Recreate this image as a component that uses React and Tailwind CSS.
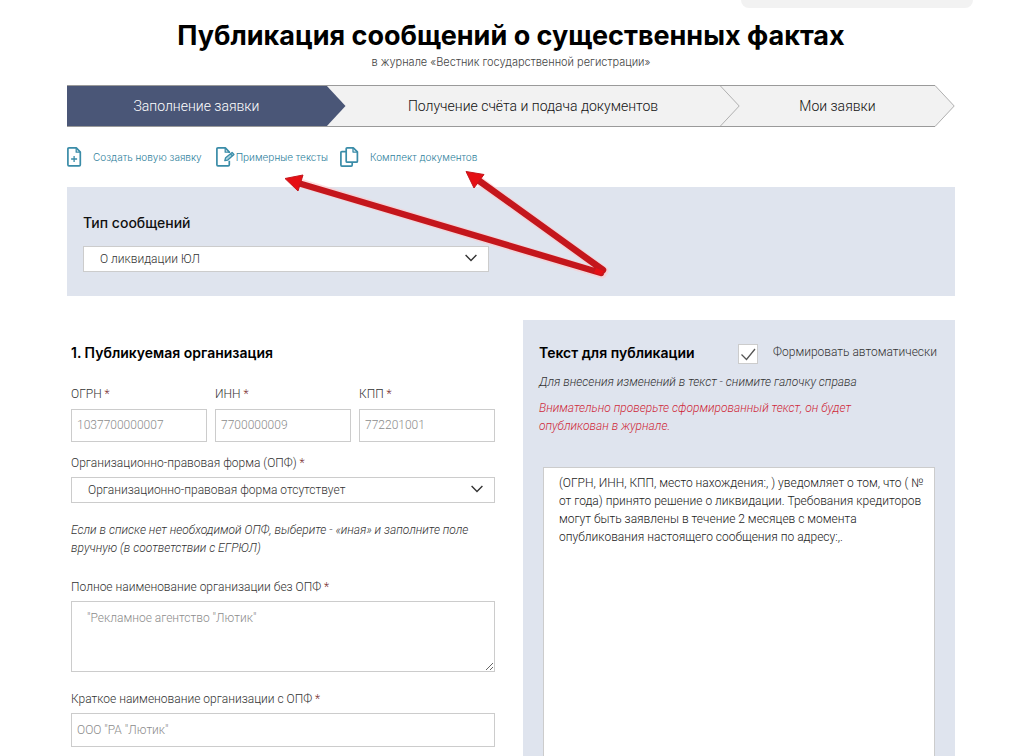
import React from "react";

const body = "font-['Roboto','Liberation_Sans',sans-serif] font-light";

const field =
  "w-full rounded-none border border-[#cccccc] bg-white text-xs font-light text-[#333333] placeholder:text-[#8c8c8c] outline-none";

function NewDocIcon() {
  return (
    <svg className="h-5 w-4 shrink-0" viewBox="0 0 16 20" fill="none" stroke="#3a8ca8" strokeWidth="1.7" strokeLinejoin="round" aria-hidden="true">
      <path d="M2 .9h7.3l4 4.2v12.6q0 1.1-1.1 1.1H2Q.9 18.8.9 17.7V2Q.9.9 2 .9Z" />
      <path d="M9.2 1v4.2h4.1M7.1 9v6M4.1 12h6" strokeWidth="1.3" />
    </svg>
  );
}

function EditDocIcon() {
  return (
    <svg className="h-5 w-5 shrink-0" viewBox="0 0 20 20" fill="none" stroke="#3a8ca8" strokeWidth="1.7" strokeLinejoin="round" aria-hidden="true">
      <path d="M13.3 6V5.100l-4-4.200H2Q.9.9.9 2v15.700q0 1.100 1.100 1.100h10.200q1.100 0 1.100-1.100v-4" />
      <path d="M9.2 1v4.200h4.100" strokeWidth="1.3" />
      <path d="m9.600 10.700 6.500-5.200 1.900 1.900-6.200 5.700-3 .6ZM14.500 6.900l1.800 1.800" fill="#a9d3e0" strokeWidth="1.3" />
    </svg>
  );
}

function DocSetIcon() {
  return (
    <svg className="h-5 w-5 shrink-0" viewBox="0 0 20 20" fill="none" stroke="#3a8ca8" strokeWidth="1.7" strokeLinejoin="round" aria-hidden="true">
      <path d="M7.200.9h6.100l4.100 4v9.300q0 1-1 1H7.200q-1 0-1-1V1.900q0-1 1-1Z" />
      <path d="M13 1v4.100h4.300" strokeWidth="1.3" />
      <path d="M6 4.700H1.900q-1 0-1 1v12.400q0 1 1 1h9.300q1 0 1-1v-2.500" />
    </svg>
  );
}

function Step({ label, href, active, last, className }) {
  return (
    <li className={`flex ${className}`}>
      <a
        href={href}
        aria-current={active ? "step" : undefined}
        className={`flex h-[42px] flex-1 items-center justify-center border-y border-[#9a9a9a] text-sm ${
          active ? "bg-[#4a5677] text-white" : "bg-[#f2f2f2] text-[#111111]"
        }`}
      >
        {label}
      </a>
      <svg className="h-[42px] w-5 shrink-0" viewBox="0 0 20 42" fill="none" aria-hidden="true">
        {!last && <path d="M0 0h20v42H0Z" fill="#f2f2f2" />}
        <path d="M0 0 19.500 21 0 42Z" fill={active ? "#4a5677" : "#f2f2f2"} />
        {!active && <path d="M0 .5 19.200 21 0 41.500" stroke="#b0b0b0" />}
        {!last && <path d="M0 .5h20M0 41.500h20" stroke="#9a9a9a" />}
      </svg>
    </li>
  );
}

function SelectField({ id, value }) {
  return (
    <div className="relative">
      <select id={id} className={`${field} block h-[26px] appearance-none pr-10 pl-4`}>
        <option>{value}</option>
      </select>
      <svg className="pointer-events-none absolute top-2 right-3 h-2 w-3" viewBox="0 0 12 8" fill="none" stroke="#333333" strokeWidth="1.4" aria-hidden="true">
        <path d="m.6 1 5.400 5.400L11.400 1" />
      </svg>
    </div>
  );
}

function Label({ htmlFor, children }) {
  return (
    <label htmlFor={htmlFor} className="block text-xs leading-4 text-[#333333]">
      {children} <span className="text-[#7a3030]">*</span>
    </label>
  );
}

const ids = [
  { id: "ogrn", label: "ОГРН", placeholder: "1037700000007" },
  { id: "inn", label: "ИНН", placeholder: "7700000009" },
  { id: "kpp", label: "КПП", placeholder: "772201001" },
];

function Pointers() {
  return (
    <svg className="pointer-events-none absolute top-[160px] left-[276px] h-[124px] w-[340px]" viewBox="276 160 340 124" aria-hidden="true">
      <g stroke="#ffc9cb" strokeWidth="9" strokeLinecap="round" opacity=".6">
        <path d="M300 183 602 274M478 180 604 271" />
      </g>
      <g stroke="#c4161c" strokeWidth="6.500" strokeLinecap="round">
        <path d="M298 183 601 273M478 180 603 270" />
      </g>
      <g fill="#e50f14" stroke="#c4161c">
        <path d="m285 178.500 18-3.500-5 16Z" />
        <path d="m466 171.500 18 3-10 13.500Z" />
      </g>
      <path d="m596 268 8 3-3 4-7-2Z" fill="#e50f14" />
    </svg>
  );
}

export default function App() {
  return (
    <div className="relative flex min-h-screen flex-col bg-white font-['Inter','Liberation_Sans',sans-serif]">
      <div className="flex justify-end pr-[41px]">
        <div className="h-2 w-58 rounded-b-lg bg-[#f2f2f2]" />
      </div>

      <div className="flex flex-1 flex-col pr-[59px] pl-[67px]">
        <header className="pt-2.5 text-center">
          <h1 className="text-[27px] leading-9 font-bold text-black">Публикация сообщений о существенных фактах</h1>
          <p className="text-[11px] leading-4 font-light text-[#444444]">в журнале «Вестник государственной регистрации»</p>
        </header>

        <ol className={`mt-[15px] flex ${body}`}>
          <Step label="Заполнение заявки" href="#form" active className="grow-[279] basis-0" />
          <Step label="Получение счёта и подача документов" href="#invoice" className="grow-[394] basis-0" />
          <Step label="Мои заявки" href="#requests" last className="grow-[215] basis-0" />
        </ol>

        <nav className="mt-5 flex items-center text-[10px] leading-4 font-light text-[#2f7f9c]">
          <a href="#new" className="flex items-center gap-2.5">
            <NewDocIcon />
            Создать новую заявку
          </a>
          <a href="#samples" className="ml-3.5 flex items-center">
            <EditDocIcon />
            Примерные тексты
          </a>
          <a href="#set" className="ml-3 flex items-center gap-2.5">
            <DocSetIcon />
            Комплект документов
          </a>
        </nav>

        <section className="mt-5 bg-[#dfe4ee] px-4 pt-6 pb-6">
          <label htmlFor="type" className="block text-sm leading-6 font-medium text-[#111111]">
            Тип сообщений
          </label>
          <div className={`mt-[11px] max-w-[406px] ${body}`}>
            <SelectField id="type" value="О ликвидации ЮЛ" />
          </div>
        </section>

        <div className="mt-6 grid flex-1 grid-cols-[428fr_432fr] gap-7">
          <section className={`pt-6 pl-1 ${body}`}>
            <h2 className="font-['Inter','Liberation_Sans',sans-serif] text-sm leading-[18px] font-semibold text-black">1. Публикуемая организация</h2>
            <div className="mt-6 grid grid-cols-3 gap-2">
              {ids.map((f) => (
                <div key={f.id}>
                  <Label htmlFor={f.id}>{f.label}</Label>
                  <input id={f.id} placeholder={f.placeholder} className={`${field} mt-[7px] block h-[33px] px-[5px] pb-0.5`} />
                </div>
              ))}
            </div>
            <div className="mt-[13px]">
              <Label htmlFor="opf">Организационно-правовая форма (ОПФ)</Label>
              <div className="mt-1.5">
                <SelectField id="opf" value="Организационно-правовая форма отсутствует" />
              </div>
            </div>
            <p className="mt-[18px] text-xs leading-[18px] text-[#333333] italic">
              Если в списке нет необходимой ОПФ, выберите - «иная» и заполните поле вручную (в соответствии с ЕГРЮЛ)
            </p>
            <div className="mt-[22px]">
              <Label htmlFor="full">Полное наименование организации без ОПФ</Label>
              <textarea id="full" placeholder={'"Рекламное агентство "Лютик"'} className={`${field} mt-1.5 block h-[71px] resize-y px-[15px] py-2`} />
            </div>
            <div className="mt-[19px]">
              <Label htmlFor="short">Краткое наименование организации с ОПФ</Label>
              <input id="short" placeholder={'ООО "РА "Лютик"'} className={`${field} mt-1.5 block h-[34px] px-[5px]`} />
            </div>
          </section>

          <section className={`flex flex-col bg-[#dfe4ee] pt-6 pr-[18px] pl-4 ${body}`}>
            <div className="flex justify-between">
              <h2 className="font-['Inter','Liberation_Sans',sans-serif] text-sm leading-[18px] font-semibold text-black">Текст для публикации</h2>
              <div className="flex gap-[15px]">
                <span className="grid h-5 w-5">
                  <input
                    id="auto"
                    type="checkbox"
                    defaultChecked
                    className="peer col-start-1 row-start-1 h-5 w-5 appearance-none border border-[#cccccc] bg-white"
                  />
                  <svg className="pointer-events-none col-start-1 row-start-1 hidden h-5 w-5 peer-checked:block" viewBox="0 0 20 20" fill="none" stroke="#555555" strokeWidth="1.300" aria-hidden="true">
                    <path d="m3.500 10.500 5 5L17 5" />
                  </svg>
                </span>
                <label htmlFor="auto" className="text-xs leading-4 text-[#333333]">
                  Формировать автоматически
                </label>
              </div>
            </div>
            <p className="mt-[9px] text-xs leading-[18px] text-[#333333] italic">
              Для внесения изменений в текст - снимите галочку справа
            </p>
            <p className="mt-2 max-w-[340px] text-xs leading-[18px] text-[#cf2a3a] italic">
              Внимательно проверьте сформированный текст, он будет опубликован в журнале.
            </p>
            <textarea
              aria-label="Текст для публикации"
              readOnly
              className="mt-8 mr-0.5 ml-1 min-h-72 flex-1 resize-none border border-b-0 border-[#cccccc] bg-white py-1.5 pr-2 pl-[15px] text-xs leading-[18px] font-light text-[#222222] outline-none"
              defaultValue="(ОГРН, ИНН, КПП, место нахождения:, ) уведомляет о том, что ( № от года) принято решение о ликвидации. Требования кредиторов могут быть заявлены в течение 2 месяцев с момента опубликования настоящего сообщения по адресу:,."
            />
          </section>
        </div>
      </div>
      <Pointers />
    </div>
  );
}
